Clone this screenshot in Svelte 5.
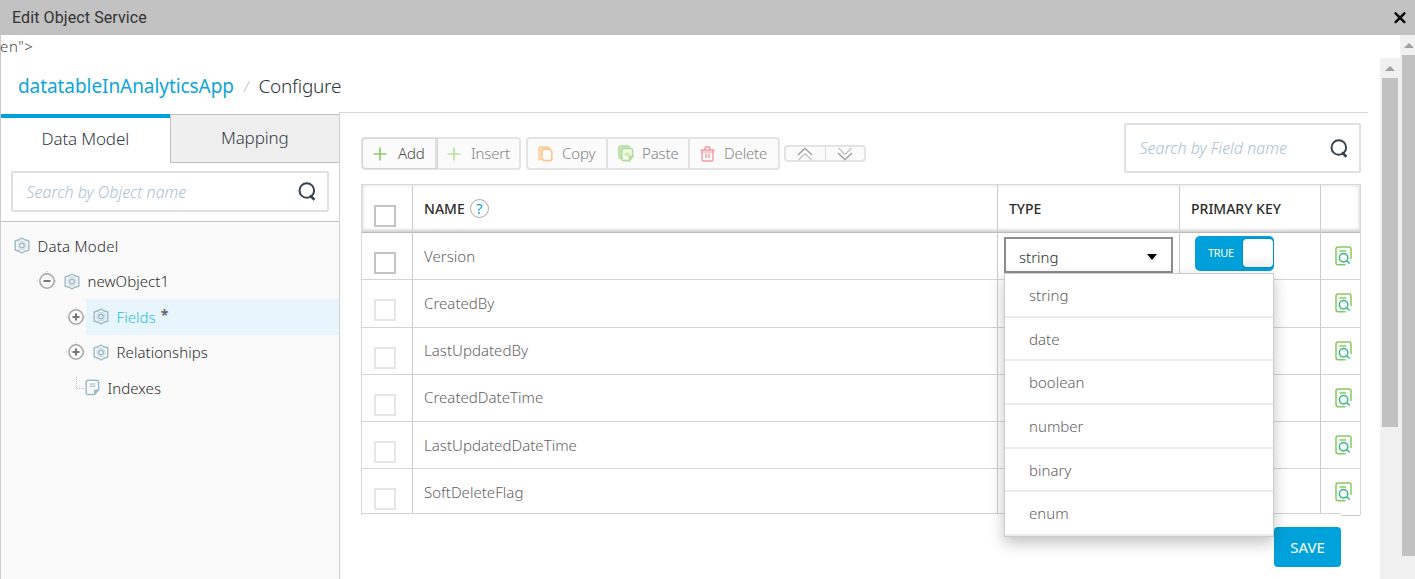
<script>
  const tree = [
    { label: 'Data Model', kind: 'gear', indent: 13, toggle: '' },
    { label: 'newObject1', kind: 'gear', indent: 36, toggle: 'minus' },
    { label: 'Fields', kind: 'gear', indent: 65, toggle: 'plus', active: true },
    { label: 'Relationships', kind: 'gear', indent: 65, toggle: 'plus' },
    { label: 'Indexes', kind: 'page', indent: 74, toggle: 'branch' }
  ];
  const rows = ['Version', 'CreatedBy', 'LastUpdatedBy', 'CreatedDateTime', 'LastUpdatedDateTime', 'SoftDeleteFlag'];
  const options = ['string', 'date', 'boolean', 'number', 'binary', 'enum'];
</script>

{#snippet magnifier()}
  <svg class="mag" width="20" height="21" viewBox="0 0 20 21" fill="none" stroke="#36424d" stroke-width="2">
    <circle cx="9.8" cy="9.5" r="7.3" /><path d="M12.9 14.4L17.5 18.8" stroke-width="2.6" />
  </svg>
{/snippet}

{#snippet gear()}
  <svg width="16" height="17" viewBox="0 0 16 17" fill="none" stroke="#9dbac6" stroke-width="1.4">
    <path d="M8 1L10.3 2.5L14.8 4V13L10.3 14.5L8 16L5.7 14.5L1.2 13V4L5.7 2.5Z" stroke-linejoin="round" />
    <circle cx="8" cy="8.5" r="4.1" stroke="#c0d4dc" stroke-width="1" /><circle cx="8" cy="8.5" r="2.3" />
  </svg>
{/snippet}

<div class="window">
  <header class="titlebar">
    <span>Edit Object Service</span>
    <svg width="12" height="12" viewBox="0 0 12 12" stroke="#000" stroke-width="2.4" stroke-linecap="round"><path d="M1.6 1.3L10.4 10.1M10.4 1.3L1.6 10.1" /></svg>
  </header>
  <div class="frame">
    <div class="document">
      <div class="stray">en"&gt;</div>
      <div class="viewport">
        <div class="page">
          <div class="crumbs"><a href="#app">datatableInAnalyticsApp</a><i>/</i><span>Configure</span></div>
          <div class="split">
            <aside>
              <nav class="tabs">
                <div class="tab on"><span>Data Model</span></div>
                <div class="tab"><span>Mapping</span></div>
              </nav>
              <div class="finder"><div class="search"><em>Search by Object name</em>{@render magnifier()}</div></div>
              <ul class="tree">
                {#each tree as n}
                  <li style:padding-left="{n.indent}px">
                    {#if n.toggle === 'plus' || n.toggle === 'minus'}
                      <svg class="exp" width="20" height="20" viewBox="0 0 20 20" fill="none" stroke="#a6a6a6">
                        <path d="M10 0V2M0 10H2M18 10H20" stroke="#bbb" stroke-dasharray="1 1" />
                        <circle cx="10" cy="10" r="7.2" stroke-width="1.5" />
                        <path d={n.toggle === 'plus' ? 'M6.5 10H13.5M10 6.5V13.5' : 'M6.5 10H13.5'} stroke="#777" stroke-width="2" />
                      </svg>
                    {:else if n.toggle === 'branch'}
                      <svg class="branch" width="10" height="22" viewBox="0 0 10 22" fill="none" stroke="#bbb" stroke-dasharray="1 1"><path d="M1.5 5V16.5H10" /></svg>
                    {/if}
                    <div class="node" class:active={n.active} class:leaf={n.kind === 'page'} class:root={!n.toggle}>
                      {#if n.kind === 'gear'}{@render gear()}{:else}
                        <svg width="15" height="17" viewBox="0 0 15 17" fill="none" stroke="#9cb9c5" stroke-width="1.5">
                          <path d="M3 1.2H12Q13.6 1.2 13.6 3V11L9.5 15.6H3Q1.2 15.6 1.2 14V3Q1.2 1.2 3 1.2Z" /><path d="M13.6 11H10.5Q9.5 11 9.5 12V15.6Z" fill="#9cb9c5" stroke-width="1" /><path d="M4.5 5H10.5M4.5 7.3H10.5" stroke-width="1.1" />
                        </svg>
                      {/if}
                      <span>{n.label}</span>
                      {#if n.active}<b>*</b>{/if}
                    </div>
                  </li>
                {/each}
              </ul>
            </aside>
            <main>
              <div class="tools">
                <div class="group">
                  <div class="btn add"><svg width="14" height="14" viewBox="0 0 14 14" stroke="#8dcc6a" stroke-width="1.7"><path d="M7 .5V13.5M.5 7H13.5" /></svg><span>Add</span></div>
                  <div class="btn insert"><svg width="14" height="14" viewBox="0 0 14 14" stroke="#b9e2a4" stroke-width="1.7"><path d="M7 .5V13.5M.5 7H13.5" /></svg><span>Insert</span></div>
                </div>
                <div class="group">
                  <div class="btn copy"><svg width="15" height="16" viewBox="0 0 15 16" fill="none" stroke="#fbd59f" stroke-width="1.8"><path d="M3.5 13.5H3Q1 13.5 1 11.5V3Q1 1 3 1H9Q11 1 11 3" fill="#fde5c8" /><path d="M5.5 3H11.5L13.8 5.5V12.5Q13.8 14.6 11.8 14.6H6L3.8 12.5V5Z" fill="#fcfcfc" stroke="#fbc793" /></svg><span>Copy</span></div>
                  <div class="btn paste"><svg width="16" height="17" viewBox="0 0 16 17" fill="none" stroke="#b3dc9f" stroke-width="1.6"><path d="M3 13.5Q1 13.5 1 11.5V3Q1 1 3 1H9.5Q11.5 1 11.5 3" fill="#cfeac2" /><path d="M5.5 3.5H13Q14.6 3.5 14.6 5V11.5L11.5 15.6H5.5Q3.8 15.6 3.8 14V5Q3.8 3.5 5.5 3.5Z" fill="#f3faef" /><path d="M14.6 11.5H11.5V15.6Z" fill="#a9d893" /><path d="M7 8H11.5V10.5H7Z" fill="#d3ec9c" stroke="#d3ecb0" stroke-width="1" /></svg><span>Paste</span></div>
                  <div class="btn delete"><svg width="15" height="16" viewBox="0 0 15 16" fill="none" stroke="#f49ca4" stroke-width="1.4"><path d="M.5 4H14.5M4.5 4L5.5 1H9.5L10.5 4M2 4V13.5Q2 15 3.5 15H11.5Q13 15 13 13.5V4M6 7.5V12M9 7.5V12" /><path d="M1 6H14" stroke-width="1" /></svg><span>Delete</span></div>
                </div>
                <div class="group arrows">
                  <div><svg width="16" height="14" viewBox="0 0 16 14" fill="none"><path d="M1 8L8 1.3L15 8" stroke="#969696" stroke-width="1.2" /><path d="M1.5 13L8 6.6L14.5 13" stroke="#c0c0c0" stroke-width="1.2" /></svg></div>
                  <div><svg width="16" height="14" viewBox="0 0 16 14" fill="none"><path d="M1 6L8 12.7L15 6" stroke="#969696" stroke-width="1.2" /><path d="M1.5 1L8 7.4L14.5 1" stroke="#c0c0c0" stroke-width="1.2" /></svg></div>
                </div>
                <div class="search field"><em>Search by Field name</em>{@render magnifier()}</div>
              </div>
              <div class="table">
                <div class="row head">
                  <div class="cell check"><i></i></div>
                  <div class="cell name"><strong>NAME</strong><span class="help">?</span></div>
                  <div class="cell type"><strong>TYPE</strong></div>
                  <div class="cell key"><strong>PRIMARY KEY</strong></div>
                  <div class="cell info"></div>
                </div>
                {#each rows as r, i}
                  <div class="row" class:dim={i > 0}>
                    <div class="cell check"><i></i></div>
                    <div class="cell name"><span>{r}</span></div>
                    <div class="cell type">
                      {#if i === 0}
                        <div class="select"><span>string</span><svg width="10" height="6" viewBox="0 0 10 6"><path d="M0 0H10L5 6Z" /></svg>
                          <div class="menu">{#each options as o}<div><span>{o}</span></div>{/each}</div>
                        </div>
                      {/if}
                    </div>
                    <div class="cell key">{#if i === 0}<div class="switch"><span>TRUE</span><i></i></div>{/if}</div>
                    <div class="cell info">
                      <svg width="17" height="20" viewBox="0 0 17 20" fill="none" stroke="#86cb5c" stroke-width="1.5">
                        <path d="M10.5 18.8H3Q1 18.8 1 16.8V3Q1 1 3 1H14Q16 1 16 3V13M4.5 5H11" />
                        <g stroke="#2fbd85"><circle cx="8.6" cy="11.8" r="4.2" /><path d="M11.3 14.5L14.8 17.5" /></g>
                      </svg>
                    </div>
                  </div>
                {/each}
              </div>
              <div class="actions"><button>SAVE</button></div>
            </main>
          </div>
        </div>
        <div class="scroll inner"><svg width="10" height="5" viewBox="0 0 10 5"><path d="M0 5L5 0L10 5Z" fill="#a0a0a0" /></svg><div></div></div>
      </div>
    </div>
    <div class="scroll outer"><svg width="10" height="5" viewBox="0 0 10 5"><path d="M0 5L5 0L10 5Z" fill="#a0a0a0" /></svg><div></div></div>
  </div>
</div>

<style>
  :global(body) { background: #fff; overflow: hidden; }
  .window { box-sizing: border-box; height: 579px; overflow: hidden; font: 350 15px/20px "Noto Sans", "Open Sans", sans-serif; color: #2c2c2c; display: flex; flex-direction: column; white-space: nowrap; }
  .window * { box-sizing: border-box; }
  svg { flex: none; display: block; }
  .titlebar { height: 35px; flex: none; background: #c2c2c2; display: flex; align-items: center; justify-content: space-between; padding: 0 9px 0 12px; font: 400 16px/20px Roboto, sans-serif; color: #333; }
  .titlebar span { letter-spacing: .1px; }
  .frame { flex: 1; display: flex; min-height: 0; }
  .document { flex: 1; border-left: 1px solid #ccc; display: flex; flex-direction: column; min-width: 0; }
  .stray { height: 23px; line-height: 23px; font-size: 15px; margin-left: -1px; letter-spacing: .6px; color: #444; }
  .viewport { flex: 1; display: flex; min-height: 0; }
  .page { flex: 1; min-width: 0; display: flex; flex-direction: column; }
  .crumbs { height: 54px; padding: 2px 0 0 17px; display: flex; align-items: center; font-size: 19px; line-height: 26px; color: #2c3640; flex: none; letter-spacing: -.07px; }
  .crumbs span { letter-spacing: -.25px; }
  .crumbs a { color: #0da5dc; text-decoration: none; font-weight: 400; }
  .crumbs i { color: #bbb; font-size: 14px; margin: 2px 10px 0 10px; }
  .split { flex: 1; display: flex; min-height: 0; }
  aside { width: 339px; flex: none; border-right: 1px solid #cfcfcf; display: flex; flex-direction: column; padding-top: 2px; }
  .tabs { display: flex; height: 49px; flex: none; }
  .tab { flex: 1; display: flex; align-items: center; justify-content: center; font-size: 17px; color: #323b45; background: #efefef; border: 1px solid #c0c0c0; border-right: 0; }
  .tab span { letter-spacing: -.15px; margin-top: -1px; }
  .tab.on { border: 0; border-top: 4px solid #00a2dc; background: #fff; padding-bottom: 3px; }
  .finder { height: 59px; flex: none; padding: 8px 10px 0 10px; border-bottom: 1px solid #c4c4c4; }
  .search { height: 41px; border: 2px solid #e0e0e0; border-radius: 2px; display: flex; justify-content: space-between; align-items: center; padding: 0 10px 0 13.5px; }
  .search em { color: #abbfd3; font-size: 16px; font-weight: 300; }
  .tree { flex: 1; margin: 0; padding: 6px 0 0; list-style: none; background: #fafafa; }
  .tree li { display: flex; height: 35.5px; align-items: center; }
  .branch { margin-top: -10px; }
  .node { flex: 1; height: 35.5px; display: flex; align-items: center; padding-left: 7px; }
  .node.root, .node.leaf { padding-left: 0; }
  .node span { margin-left: 7.5px; letter-spacing: .05px; }
  .node.root span { letter-spacing: .25px; }
  .node.active { background: #e8f5fd; color: #1fbdea; }
  .node b { color: #666; font-size: 14px; margin: -3px 0 0 5px; }
  main { flex: 1; min-width: 0; padding: 9px 7px 0 21px; border-top: 1px solid #d8d8d8; margin-right: 12px; }
  .tools { display: flex; height: 62px; align-items: flex-start; padding-top: 1px; }
  .group { display: flex; height: 33px; margin: 14px 5px 0 0; border: 2px solid #e4e4e4; border-radius: 4px; background: #fbfbfb; }
  .btn { display: flex; align-items: center; padding-left: 10px; color: #858585; border-right: 2px solid #e2e2e2; }
  .btn:last-child { border-right: 0; }
  .btn span { margin: -2px 0 0 10px; letter-spacing: -.15px; }
  .btn.add span { margin-left: 11px; }
  .add { width: 74px; color: #4a4a4a; box-shadow: 0 0 0 1px #d4d4d4; border-radius: 3px 0 0 3px; }
  .insert { width: 82px; }
  .copy { width: 80px; }
  .paste { width: 82px; }
  .copy span, .delete span { margin-left: 9px; }
  .paste span { margin-left: 8px; }
  .delete { width: 88px; }
  .arrows { height: 17px; margin: 22px 0 0 -1px; width: 82px; }
  .arrows div { flex: 1; display: flex; align-items: center; justify-content: center; }
  .arrows div + div { border-left: 1px solid #ddd; }
  .field { margin-left: auto; width: 237px; height: 50px; padding-right: 10px; }
  .table { height: 331px; border: 1px solid #d8d8d8; border-bottom: 0; }
  .row { display: grid; grid-template-columns: 51px 585px 182px 141px 1fr; height: 47.25px; }
  .cell { border-right: 1px solid #ccc; border-bottom: 1px solid #d4d4d4; display: flex; align-items: flex-start; padding-top: 12.5px; padding-left: 11px; }
  .cell:last-child { border-right: 0; }
  .row.head { height: 48px; box-shadow: inset 0 0 5px #ddd, inset 0 -3px 3px #ccc; }
  .row.head .cell { border-bottom: 1px solid #bbb; padding-top: 14px; }
  .row .check { padding: 19px 0 0 12px; }
  .row.head .check { padding-top: 20px; }
  .check i { width: 22px; height: 22px; border: 2px solid #c4c4c4; }
  .dim .check i { border-color: #e6e6e6; }
  .name { color: #626262; letter-spacing: .03px; }
  strong { font-size: 14px; font-weight: 500; color: #2c2c2c; }
  .help { width: 19px; height: 19px; border: 1.5px solid #aaa; border-radius: 50%; color: #0da5dc; text-align: center; line-height: 17px; margin-left: 5px; font-weight: 400; }
  .row .type { padding: 4px 0 0 6px; }
  .row.head .type { padding: 14px 0 0 11px; }
  .select { position: relative; width: 169px; height: 36px; border: 2px solid #8d8d8d; background: #fff; display: flex; align-items: center; justify-content: space-between; padding: 4px 14px 0 13px; }
  .menu { position: absolute; z-index: 3; left: -2px; top: 34px; width: 270px; height: 264px; background: #fff; border: 1px solid #ccc; box-shadow: 0 6px 14px rgba(0,0,0,.24); color: #606060; display: flex; flex-direction: column; }
  .menu div { flex: 1; border-bottom: 2px solid #ebebeb; display: flex; align-items: center; padding: 0 0 0 24px; }
  .row .key { padding: 3px 0 0 15px; }
  .row.head .key { padding: 14px 0 0 11px; }
  .switch { width: 79px; height: 35px; border-radius: 5px; background: #00a0da; color: #fff; display: flex; align-items: center; justify-content: space-between; padding: 0 1px 1px 13px; font-size: 11px; font-weight: 400; }
  .switch span { letter-spacing: -.35px; }
  .switch i { width: 30px; height: 28px; border-radius: 4px; background: linear-gradient(#fff 60%, #eee); box-shadow: 0 0 2px #006a96; }
  .row .info { padding: 13px 0 0 14px; }
  .row:last-child { height: 45px; grid-template-rows: 45px; }
  .row:last-child .info { height: 47px; border-bottom: 0; background: linear-gradient(#d4d4d4, #d4d4d4) 0 44px / 20px 1px no-repeat, linear-gradient(#ccc, #ccc) 20px 46px / 20px 1px no-repeat; }
  .actions { display: flex; justify-content: flex-end; padding: 12px 20px 0 0; }
  button { width: 67px; height: 40px; border: 0; border-radius: 4px; background: #00a2dc; color: #fff; font: 400 15px/20px "Noto Sans", sans-serif; padding: 0 0 1px; }
  .scroll { background: #f0f0f0; flex: none; display: flex; flex-direction: column; align-items: center; }
  .scroll div { background: #c1c1c1; }
  .inner { width: 20px; }
  .inner svg { margin: 8px 0 7px; }
  .inner div { width: 16px; height: 349px; }
  .outer { width: 15px; align-items: flex-end; }
  .outer svg { margin: 8px 1px 7px; }
  .outer div { width: 13px; height: 501px; }
</style>
